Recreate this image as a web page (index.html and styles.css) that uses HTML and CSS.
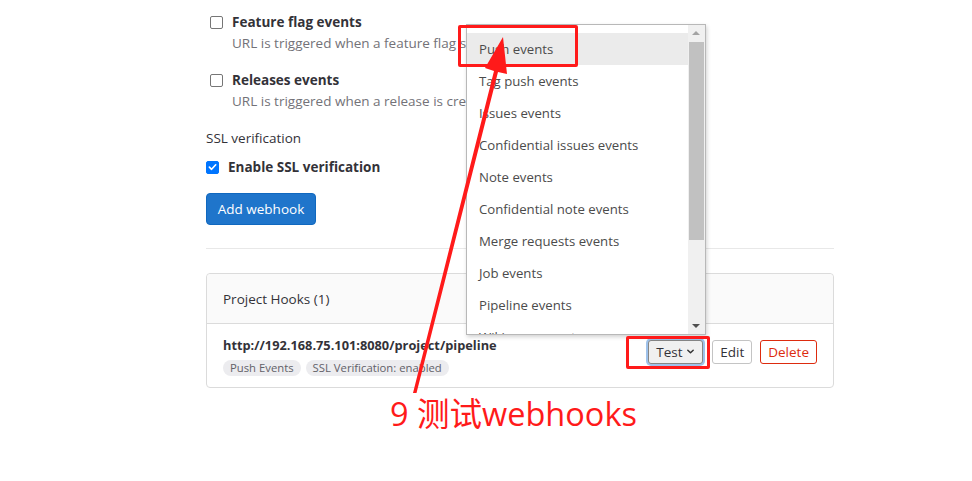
FILE: index.html
```html
<!DOCTYPE html>
<html>
<head>
<meta charset="utf-8">
<link rel="stylesheet" href="styles.css">
</head>
<body>
<div class="page">
  <div class="main">
    <div class="check-item">
      <span class="cb"></span>
      <div class="check-text">
        <div class="check-label">Feature flag events</div>
        <div class="check-help">URL is triggered when a feature flag state changes</div>
      </div>
    </div>
    <div class="check-item">
      <span class="cb"></span>
      <div class="check-text">
        <div class="check-label">Releases events</div>
        <div class="check-help">URL is triggered when a release is created/updated</div>
      </div>
    </div>
    <div class="section-label">SSL verification</div>
    <div class="check-item ssl">
      <span class="cb checked"><svg viewBox="0 0 12 12" width="12" height="12"><path d="M2.6 6.2 L5 8.5 L9.5 3.6" fill="none" stroke="#fff" stroke-width="1.8" stroke-linecap="round" stroke-linejoin="round"/></svg></span>
      <div class="check-label">Enable SSL verification</div>
    </div>
    <button class="btn-primary">Add webhook</button>
    <hr class="divider">
    <div class="card">
      <div class="card-header">Project Hooks (1)</div>
      <div class="card-row">
        <div class="hook-info">
          <div class="hook-url">http://192.168.75.101:8080/project/pipeline</div>
          <div class="badges">
            <span class="badge">Push Events</span>
            <span class="badge">SSL Verification: enabled</span>
          </div>
        </div>
        <div class="actions">
          <button class="btn test">Test <svg class="chev" viewBox="0 0 10 10" width="9" height="9"><path d="M2 3.5 L5 6.5 L8 3.5" fill="none" stroke="#333" stroke-width="1.6" stroke-linecap="round" stroke-linejoin="round"/></svg></button>
          <button class="btn">Edit</button>
          <button class="btn danger">Delete</button>
        </div>
      </div>
    </div>
  </div>

  <div class="dropdown">
    <ul class="menu">
      <li class="active">Push events</li>
      <li>Tag push events</li>
      <li>Issues events</li>
      <li>Confidential issues events</li>
      <li>Note events</li>
      <li>Confidential note events</li>
      <li>Merge requests events</li>
      <li>Job events</li>
      <li>Pipeline events</li>
      <li>Wiki page events</li>
    </ul>
    <div class="scrollbar">
      <div class="sb-up"></div>
      <div class="sb-thumb"></div>
      <div class="sb-down"></div>
    </div>
  </div>

  <div class="mark mark-push"></div>
  <div class="mark mark-test"></div>
  <svg class="arrow" width="972" height="481" viewBox="0 0 972 481">
    <path d="M413 393 L416.5 393 L498 72 L507 74 L503 37 L485 68 L494 71 Z" fill="#ff1a1a"/>
  </svg>
  <div class="caption">9 测试webhooks</div>
</div>
</body>
</html>
```

FILE: styles.css
```css
* { box-sizing: border-box; }
html, body { margin: 0; padding: 0; background: #fff; }
body {
  font-family: "Open Sans", "Noto Sans", sans-serif;
  font-size: 13px;
  color: #333238;
  width: 972px;
  height: 481px;
  overflow: hidden;
}
.page { position: relative; width: 972px; height: 481px; }
.main {
  margin-left: 206px;
  width: 628px;
  padding-top: 12px;
  display: flex;
  flex-direction: column;
  align-items: flex-start;
}
.check-item {
  display: flex;
  align-items: flex-start;
  gap: 9px;
  margin-left: 4px;
  margin-bottom: 16px;
}
.cb {
  width: 13px;
  height: 13px;
  border: 1px solid #767676;
  border-radius: 2px;
  margin-top: 4px;
  flex: none;
  display: flex;
  align-items: center;
  justify-content: center;
  background: #fff;
}
.cb.checked { background: #0075ff; border-color: #0075ff; }
.check-label { font-weight: 700; line-height: 20px; color: #333238; font-size: 13.5px; }
.check-help { color: #737278; line-height: 22px; font-size: 13.5px; }
.section-label { line-height: 20px; margin-top: 0; margin-bottom: 9px; font-size: 13.5px; }
.check-item.ssl { margin-bottom: 16px; align-items: center; margin-left: 0; }
.check-item.ssl .cb { margin-top: 0; }
.btn-primary {
  font-family: inherit;
  font-size: 13.5px;
  background: #1f75cb;
  color: #fff;
  border: 1px solid #1068bf;
  border-radius: 4px;
  width: 110px;
  height: 32px;
  padding: 0;
}
.divider {
  width: 628px;
  border: 0;
  border-top: 1px solid #e8e8e8;
  margin: 23px 0 24px 0;
}
.card {
  width: 628px;
  border: 1px solid #dbdbdb;
  border-radius: 4px;
}
.card-header {
  background: #fafafa;
  height: 50px;
  border-bottom: 1px solid #dbdbdb;
  padding: 0 16px;
  display: flex;
  align-items: center;
  font-size: 13.5px;
  border-radius: 4px 4px 0 0;
}
.card-row {
  display: flex;
  align-items: center;
  justify-content: space-between;
  padding: 12px 16px 12px 16px;
  height: 63px;
}
.hook-url { font-weight: 700; line-height: 20px; font-size: 12.8px; }
.badges { display: flex; gap: 5px; margin-top: 5px; }
.badge {
  background: #ececef;
  color: #626168;
  font-size: 11.3px;
  line-height: 16px;
  padding: 0 7px;
  border-radius: 8px;
}
.actions { display: flex; gap: 8px; align-items: center; margin-top: -8px; }
.btn {
  font-family: inherit;
  font-size: 13.5px;
  height: 24px;
  padding: 0 7px;
  background: #fff;
  border: 1px solid #c4c4c4;
  border-radius: 3px;
  color: #333238;
  display: flex;
  align-items: center;
  gap: 3px;
}
.btn.test {
  background: #f0f0f0;
  border-color: #868686;
  box-shadow: 0 0 0 2px #9fc2eb;
  width: 55px;
  margin-right: 1px;
}
.btn.danger { color: #dd2b0e; border-color: #dd2b0e; }
.dropdown {
  position: absolute;
  left: 466px;
  top: 24px;
  width: 240px;
  height: 311px;
  background: #fff;
  border: 1px solid #b8b8b8;
  box-shadow: 1px 2px 4px rgba(0,0,0,0.18);
  display: flex;
  overflow: hidden;
}
.menu {
  list-style: none;
  margin: 0;
  padding: 8px 0 0 0;
  flex: 1;
  color: #4b4b4b;
  font-size: 13.2px;
}
.menu li {
  height: 32px;
  line-height: 33px;
  padding-left: 12px;
  white-space: nowrap;
}
.menu li.active { background: #ebebeb; }
.scrollbar {
  width: 17px;
  background: #f0f0f0;
  display: flex;
  flex-direction: column;
  align-items: center;
  flex: none;
}
.sb-up, .sb-down { height: 17px; width: 17px; position: relative; }
.sb-up::after, .sb-down::after {
  content: "";
  position: absolute;
  left: 4px;
  border-left: 4px solid transparent;
  border-right: 4px solid transparent;
}
.sb-up::after { top: 6px; border-bottom: 4px solid #a3a3a3; }
.sb-down::after { top: 7px; border-top: 4px solid #505050; }
.sb-thumb { width: 15px; height: 198px; background: #c1c1c1; }
.sb-down { margin-top: auto; }
.mark {
  position: absolute;
  border: 3px solid #ff1a1a;
  border-radius: 2px;
}
.mark-push { left: 458px; top: 25px; width: 120px; height: 42px; }
.mark-test { left: 626px; top: 336px; width: 84px; height: 33px; }
.arrow { position: absolute; left: 0; top: 0; pointer-events: none; }
.caption {
  position: absolute;
  left: 390px;
  top: 388px;
  font-family: "Open Sans", "Noto Sans CJK SC", sans-serif;
  font-size: 32.5px;
  color: #ff1a1a;
  white-space: nowrap;
}
```
